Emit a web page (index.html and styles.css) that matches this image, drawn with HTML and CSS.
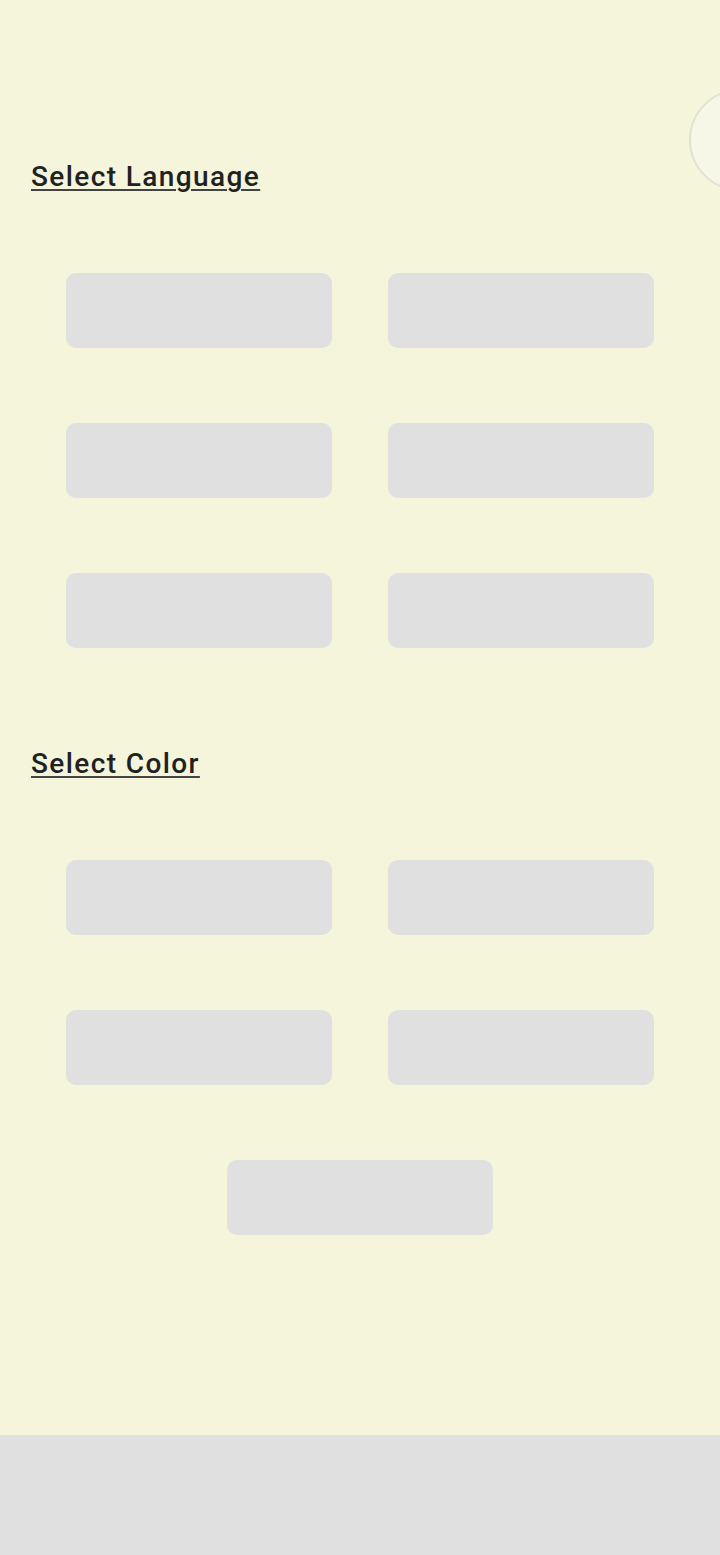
FILE: index.html
```html
<!DOCTYPE html>
<html lang="en">
<head>
<meta charset="utf-8">
<title>Settings</title>
<link rel="stylesheet" href="styles.css">
</head>
<body>
<div class="page">
  <main class="main">
    <div class="avatar"></div>
    <section class="section section-lang">
      <h2 class="heading">Select Language</h2>
      <div class="grid">
        <div class="btn"></div>
        <div class="btn"></div>
        <div class="btn"></div>
        <div class="btn"></div>
        <div class="btn"></div>
        <div class="btn"></div>
      </div>
    </section>
    <section class="section section-color">
      <h2 class="heading">Select Color</h2>
      <div class="grid">
        <div class="btn"></div>
        <div class="btn"></div>
        <div class="btn"></div>
        <div class="btn"></div>
        <div class="btn btn-center"></div>
      </div>
    </section>
  </main>
  <footer class="footer"></footer>
</div>
</body>
</html>
```
FILE: styles.css
```css
html, body {
  margin: 0;
  padding: 0;
}
body {
  background: #f5f5dc;
  font-family: Roboto, "Liberation Sans", sans-serif;
  color: #212121;
  overflow: hidden;
}
.page {
  display: flex;
  flex-direction: column;
  height: 1555px;
  overflow: hidden;
}
.main {
  position: relative;
  height: 1435px;
  box-sizing: border-box;
  padding-top: 161px;
  overflow: hidden;
}
.avatar {
  position: absolute;
  left: 689px;
  top: 89px;
  width: 98px;
  height: 98px;
  border-radius: 50%;
  background: #f7f7e8;
  border: 2px solid #e2e2d4;
}
.section {
  padding: 0 31px;
}
.section-color {
  margin-top: 100px;
}
.heading {
  margin: 0;
  font-size: 28px;
  line-height: 32px;
  font-weight: 500;
  text-decoration: underline;
  text-decoration-thickness: 2px;
  text-underline-offset: 3px;
  text-decoration-color: #444;
  letter-spacing: 1.4px;
}
.grid {
  margin-top: 80px;
  padding: 0 35px;
  display: grid;
  grid-template-columns: 266px 266px;
  column-gap: 56px;
  row-gap: 75px;
}
.btn {
  height: 75px;
  border-radius: 10px;
  background: #e0e0e0;
}
.btn-center {
  grid-column: 1 / span 2;
  justify-self: center;
  width: 266px;
}
.footer {
  height: 120px;
  background: #e0e0e0;
}
```
